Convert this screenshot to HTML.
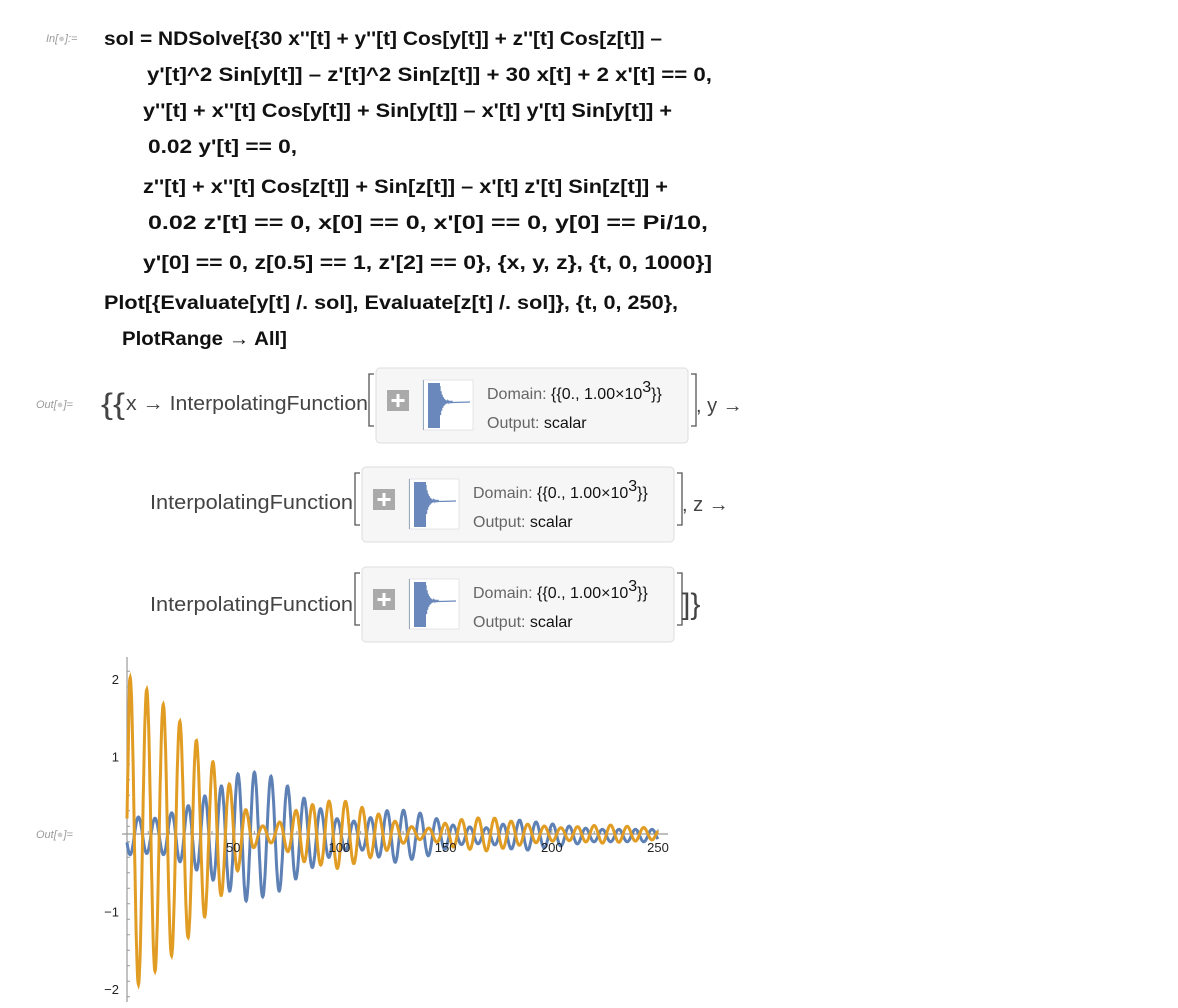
<!DOCTYPE html>
<html><head><meta charset="utf-8"><style>
html,body{margin:0;padding:0;background:#fff;}
svg{display:block;}
.c{font-family:"Liberation Sans Narrow","Liberation Sans",sans-serif;font-size:19px;font-weight:bold;fill:#111;}
.lab{font-family:"Liberation Sans",sans-serif;font-size:11px;font-style:italic;fill:#999;}
.o{font-family:"Liberation Sans Narrow","Liberation Sans",sans-serif;font-size:20px;fill:#444;}
.br{font-family:"Liberation Sans Narrow","Liberation Sans",sans-serif;font-size:30px;fill:#444;}
.d{font-family:"Liberation Sans Narrow","Liberation Sans",sans-serif;font-size:16px;fill:#666;}
.v{font-family:"Liberation Sans Narrow","Liberation Sans",sans-serif;font-size:16px;fill:#111;}
.t{font-family:"Liberation Sans",sans-serif;font-size:13px;fill:#222;}
</style></head><body>
<svg id="s" width="1178" height="1008" viewBox="0 0 1178 1008" xmlns="http://www.w3.org/2000/svg">
<rect width="1178" height="1008" fill="#fff"/>
<text class="lab" x="46" y="42">In[<tspan fill="#ccc">●</tspan>]:=</text>
<text class="c" x="104" y="45" textLength="558" lengthAdjust="spacingAndGlyphs">sol = NDSolve[{30 x''[t] + y''[t] Cos[y[t]] + z''[t] Cos[z[t]] –</text>
<text class="c" x="147" y="81" textLength="565" lengthAdjust="spacingAndGlyphs">y'[t]^2 Sin[y[t]] – z'[t]^2 Sin[z[t]] + 30 x[t] + 2 x'[t] == 0,</text>
<text class="c" x="143" y="117" textLength="529" lengthAdjust="spacingAndGlyphs">y''[t] + x''[t] Cos[y[t]] + Sin[y[t]] – x'[t] y'[t] Sin[y[t]] +</text>
<text class="c" x="148" y="153" textLength="149" lengthAdjust="spacingAndGlyphs">0.02 y'[t] == 0,</text>
<text class="c" x="143" y="193" textLength="525" lengthAdjust="spacingAndGlyphs">z''[t] + x''[t] Cos[z[t]] + Sin[z[t]] – x'[t] z'[t] Sin[z[t]] +</text>
<text class="c" x="148" y="229" textLength="560" lengthAdjust="spacingAndGlyphs">0.02 z'[t] == 0, x[0] == 0, x'[0] == 0,  y[0] == Pi/10,</text>
<text class="c" x="143" y="269" textLength="569" lengthAdjust="spacingAndGlyphs">y'[0] == 0, z[0.5] == 1, z'[2] == 0}, {x, y, z}, {t, 0, 1000}]</text>
<text class="c" x="104" y="309" textLength="574" lengthAdjust="spacingAndGlyphs">Plot[{Evaluate[y[t] /. sol], Evaluate[z[t] /. sol]}, {t, 0, 250},</text>
<text class="c" x="122" y="345" textLength="165" lengthAdjust="spacingAndGlyphs">PlotRange → All]</text>

<text class="lab" x="36" y="408">Out[<tspan fill="#ccc">●</tspan>]=</text>
<text class="br" x="101" y="414" textLength="24" lengthAdjust="spacingAndGlyphs">{{</text>
<text class="o" x="126" y="410" textLength="242" lengthAdjust="spacingAndGlyphs">x → InterpolatingFunction</text>
<text class="o" x="150" y="509" textLength="203" lengthAdjust="spacingAndGlyphs">InterpolatingFunction</text>
<text class="o" x="150" y="611" textLength="203" lengthAdjust="spacingAndGlyphs">InterpolatingFunction</text>
<g id="boxes"></g>
<text class="o" x="696" y="412">, y →</text>
<text class="o" x="682" y="511">, z →</text>
<text class="br" x="682" y="614">]}</text>

<text class="lab" x="36" y="838">Out[<tspan fill="#ccc">●</tspan>]=</text>
<g id="plot"></g>
</svg>
<script>
var NS="http://www.w3.org/2000/svg";
function el(p,n,a,txt){var e=document.createElementNS(NS,n);for(var k in a)e.setAttribute(k,a[k]);if(txt!=null)e.textContent=txt;p.appendChild(e);return e;}
var B=document.getElementById("boxes");
function box(bx,by,brx){
 el(B,"path",{d:"M"+(brx+6)+" "+(by+6)+"h-5v52h5",fill:"none",stroke:"#555","stroke-width":1.3});
 el(B,"rect",{x:bx,y:by,width:312,height:75,rx:4,fill:"#f6f6f6",stroke:"#ddd"});
 el(B,"rect",{x:bx+11,y:by+22,width:22,height:21,fill:"#aaa"});
 el(B,"path",{d:"M"+(bx+22)+" "+(by+26)+"v13M"+(bx+15.5)+" "+(by+32.5)+"h13",stroke:"#fff","stroke-width":3});
 var tx=bx+47,ty=by+12;
 el(B,"rect",{x:tx,y:ty,width:50,height:50,fill:"#fff",stroke:"#e4e4ea"});
 el(B,"line",{x1:tx+0.5,y1:ty,x2:tx+0.5,y2:ty+50,stroke:"#9ab","stroke-width":1});
 el(B,"rect",{x:tx+5,y:ty+3,width:12,height:45,fill:"#6a88bb"});
 var d="M"+(tx+17)+" "+(ty+22);for(var i=0;i<24;i++){d+="L"+(tx+17+i*0.55)+" "+(ty+22+((i%2)?1:-1)*Math.max(0.5,16*Math.exp(-i/5)));}
 d+="L"+(tx+47)+" "+(ty+22);
 el(B,"path",{d:d,fill:"none",stroke:"#6a88bb","stroke-width":1.2});
 var t1=el(B,"text",{class:"d",x:bx+111,y:by+31});
 t1.textContent="Domain: ";
 el(t1,"tspan",{class:"v"},"{{0., 1.00×10");
 el(t1,"tspan",{class:"v",dy:-7,"font-size":"11"},"3");
 el(t1,"tspan",{class:"v",dy:7},"}}");
 var t2=el(B,"text",{class:"d",x:bx+111,y:by+60},"Output: ");
 el(t2,"tspan",{class:"v"},"scalar");
 el(B,"path",{d:"M"+(bx+315)+" "+(by+6)+"h5v52h-5",fill:"none",stroke:"#555","stroke-width":1.3});
}
box(376,368,368);box(362,467,354);box(362,567,354);

var P=document.getElementById("plot");
var X0=127,Y0=834,SX=2.124,SY=77.5;
el(P,"line",{x1:122,y1:Y0,x2:668,y2:Y0,stroke:"#999","stroke-width":1.2});
el(P,"line",{x1:X0,y1:657,x2:X0,y2:1002,stroke:"#999","stroke-width":1.2});
for(var v=-2.1;v<=2.2;v+=0.2){var yy=Y0-v*SY;el(P,"line",{x1:X0,y1:yy,x2:X0+(Math.abs(v-Math.round(v))<0.05?5:3),y2:yy,stroke:"#999"});}
for(var t=10;t<=250;t+=10){var xx=X0+t*SX;el(P,"line",{x1:xx,y1:Y0,x2:xx,y2:Y0-(t%50?3:5),stroke:"#999"});}
[[2,"2"],[1,"1"],[-1,"−1"],[-2,"−2"]].forEach(function(a){el(P,"text",{class:"t",x:119,y:Y0-a[0]*SY+5,"text-anchor":"end"},a[1]);});
function interp(E,t){for(var i=1;i<E.length;i++){if(t<=E[i][0]){var a=E[i-1],b=E[i];return a[1]+(b[1]-a[1])*(t-a[0])/(b[0]-a[0]);}}return E[E.length-1][1];}
var EO=[[0,2.05],[10,1.85],[20,1.6],[30,1.3],[40,0.95],[47,0.7],[55,0.35],[62,0.1],[70,0.12],[82,0.35],[100,0.45],[115,0.3],[130,0.12],[140,0.06],[155,0.18],[170,0.22],[190,0.12],[205,0.08],[225,0.12],[250,0.07]];
var EB=[[0,0.25],[15,0.22],[30,0.4],[45,0.65],[55,0.85],[70,0.75],[85,0.45],[100,0.2],[110,0.18],[125,0.35],[140,0.28],[155,0.12],[170,0.1],[185,0.2],[200,0.15],[220,0.08],[250,0.08]];
var w=2*Math.PI/7.8;
function path(f){var d="";for(var t=0;t<=250;t+=0.15){var x=X0+t*SX,y=Y0-f(t)*SY;d+=(d?"L":"M")+x.toFixed(1)+" "+y.toFixed(1);}return d;}
el(P,"path",{d:path(function(t){return interp(EB,t)*Math.cos(w*(t-5.4))-0.02;}),fill:"none",stroke:"#5E81B5","stroke-width":3});
el(P,"path",{d:path(function(t){var a=interp(EO,t)*Math.cos(w*(t-1.5));return t<1.2?0.2+t*1.5:a;}),fill:"none",stroke:"#E19C24","stroke-width":3});
[50,100,150,200,250].forEach(function(t){el(P,"text",{class:"t",x:X0+t*SX,y:Y0+18,"text-anchor":"middle"},""+t);});
</script>
</body></html>
